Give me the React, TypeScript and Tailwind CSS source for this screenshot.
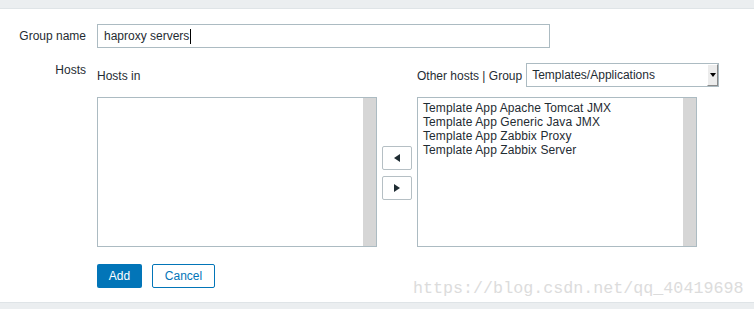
const hostsIn: string[] = [];

const otherHosts = [
  "Template App Apache Tomcat JMX",
  "Template App Generic Java JMX",
  "Template App Zabbix Proxy",
  "Template App Zabbix Server",
];

function ListBox({ items }: { items: string[] }) {
  return (
    <div className="flex h-[150px] w-[280px] border border-[#acbbc2] bg-white">
      <div className="flex-1 px-[5px] pt-[3px] text-[12px] leading-[14px] tracking-[0.1px] text-[#1f2c33]">
        {items.map((i) => (
          <div key={i}>{i}</div>
        ))}
      </div>
      <div className="w-[13px] bg-[#d6d6d6]" />
    </div>
  );
}

function MoveButton({ dir }: { dir: "left" | "right" }) {
  return (
    <button className="flex h-[24px] w-[30px] items-center justify-center rounded-[2px] border border-[#b5bfc4] bg-white">
      {dir === "left" ? (
        <svg width="6" height="8" viewBox="0 0 6 8">
          <path d="M6 0 L0 4 L6 8 Z" fill="#1f2c33" />
        </svg>
      ) : (
        <svg width="6" height="8" viewBox="0 0 6 8">
          <path d="M0 0 L6 4 L0 8 Z" fill="#1f2c33" />
        </svg>
      )}
    </button>
  );
}

export default function App() {
  return (
    <div className="relative flex h-[309px] w-[754px] flex-col overflow-hidden bg-white font-['Liberation_Sans',Arial,sans-serif] text-[12px] text-[#1f2c33]">
      <div className="h-[9px] shrink-0 border-b border-[#dfe4e7] bg-[#ebeef0]" />

      <div className="flex-1 pt-[15px]">
        {/* group name */}
        <div className="flex items-center gap-[11px]">
          <label className="w-[86px] text-right">Group name</label>
          <div className="flex h-[24px] w-[453px] items-center border border-[#acbbc2] px-[6px]">
            <span>haproxy servers</span>
            <span className="ml-px h-[15px] w-px bg-black" />
          </div>
        </div>

        {/* hosts */}
        <div className="mt-[15px] flex gap-[11px]">
          <label className="w-[86px] text-right leading-[14px]">Hosts</label>
          <div className="flex">
            <div className="w-[280px]">
              <div className="mb-[10px] flex h-[24px] items-center pt-[1px]">Hosts in</div>
              <ListBox items={hostsIn} />
            </div>
            <div className="mx-[5px] flex flex-col justify-center gap-[6px] pt-[36px]">
              <MoveButton dir="left" />
              <MoveButton dir="right" />
            </div>
            <div className="w-[280px]">
              <div className="mb-[10px] flex h-[24px] items-center gap-[4px] whitespace-nowrap">
                <span className="pt-[1px]">Other hosts | Group</span>
                <div className="flex h-[24px] w-[193px] shrink-0 items-stretch border border-[#acbbc2] bg-white">
                  <span className="flex flex-1 items-center pl-[5px]">Templates/Applications</span>
                  <span className="flex w-[11px] items-center justify-center border-r border-b border-[#8a8a8a] border-t border-l border-t-white border-l-white bg-[#ececec]">
                    <svg width="6" height="4" viewBox="0 0 6 4">
                      <path d="M0 0 L6 0 L3 4 Z" fill="#000" />
                    </svg>
                  </span>
                </div>
              </div>
              <ListBox items={otherHosts} />
            </div>
          </div>
        </div>

        {/* buttons */}
        <div className="mt-[17px] flex gap-[10px] pl-[97px]">
          <button className="h-[24px] w-[45px] rounded-[2px] bg-[#0275b8] text-white">Add</button>
          <button className="h-[24px] w-[63px] rounded-[2px] border border-[#0275b8] bg-white text-[#0275b8]">
            Cancel
          </button>
        </div>
      </div>

      <div className="h-[7px] shrink-0 border-t border-[#dfe4e7] bg-[#ebeef0]" />

      <div className="absolute bottom-[10px] left-[413px] font-['Liberation_Mono',monospace] text-[16.7px] leading-[20px] text-[#dcdcdc]">
        https://blog.csdn.net/qq_40419698
      </div>
    </div>
  );
}
